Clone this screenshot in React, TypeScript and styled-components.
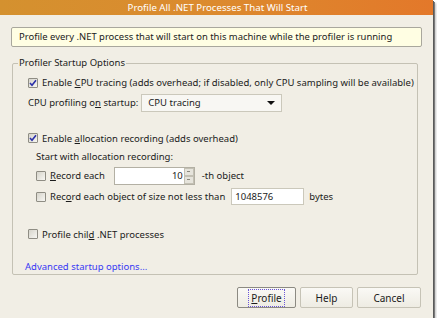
import React from "react";
import styled, { createGlobalStyle } from "styled-components";

const Global = createGlobalStyle`
  html, body { margin: 0; padding: 0; background: #ffffff; }
  body { font-family: "Noto Sans", "Open Sans", sans-serif; color: #1b1b1b; }
  * { box-sizing: border-box; }
`;

const Window = styled.div`
  width: 433px;
  height: 318px;
  background: #f1eee5;
  display: flex;
  flex-direction: column;
  box-shadow: 1px 1px 0 #5a5a5a, 2px 2px 0 #7a7a7a, 3px 3px 2px rgba(0,0,0,0.25);
`;

const TitleBar = styled.div`
  height: 15px;
  background: linear-gradient(to right, #d4912f, #dc8a2e 50%, #e3782a);
  color: #fff;
  font-size: 9.7px;
  line-height: 15px;
  text-align: center;
  padding-left: 2px;
`;

const Body = styled.div`
  flex: 1;
  display: flex;
  flex-direction: column;
  padding: 12px 0 0 11px;
  font-size: 9.5px;
`;

const Description = styled.div`
  width: 411px;
  height: 20px;
  background: #fffee3;
  border: 1px solid #a9a79d;
  border-radius: 2px;
  padding-left: 7px;
  line-height: 18px;
  font-size: 9.45px;
`;

const Group = styled.section`
  margin: 16px 0 0 1px;
  width: 406px;
  height: 212px;
  border: 1px solid #c4c1b4;
  border-radius: 2px;
  padding: 0 0 0 15px;
  display: flex;
  flex-direction: column;
`;

const GroupTitle = styled.div`
  align-self: flex-start;
  margin: -7px 0 0 -10px;
  padding: 0 1px;
  background: #f1eee5;
  line-height: 12px;
  height: 12px;
`;

const Row = styled.div<{ $top: number; $indent?: number }>`
  display: flex;
  align-items: center;
  height: 14px;
  margin-top: ${(p) => p.$top}px;
  margin-left: ${(p) => p.$indent ?? 0}px;
  white-space: nowrap;
`;

const Box = styled.span`
  width: 10px;
  height: 10px;
  border: 1px solid #8f8d84;
  border-radius: 1px;
  background: linear-gradient(135deg, #d6d4cb, #f7f6f2);
  margin-right: 4px;
  display: inline-flex;
  align-items: center;
  justify-content: center;
  flex: none;
`;

const U = styled.span`
  text-decoration: underline;
`;

const Combo = styled.div`
  margin-left: 3px;
  width: 141px;
  height: 18px;
  border: 1px solid #cbc8bb;
  background: #f8f7f3;
  display: flex;
  align-items: center;
  justify-content: space-between;
  padding: 0 6px 0 6px;
`;

const Arrow = styled.span`
  width: 0;
  height: 0;
  border-left: 4px solid transparent;
  border-right: 4px solid transparent;
  border-top: 4px solid #111;
`;

const Spin = styled.div`
  margin-left: 9px;
  width: 81px;
  height: 18px;
  border: 1px solid #b3b0a4;
  background: #fff;
  display: flex;
  align-items: stretch;
`;

const SpinValue = styled.div`
  flex: 1;
  text-align: right;
  padding-right: 1px;
  line-height: 16px;
`;

const SpinButtons = styled.div`
  width: 10px;
  display: flex;
  flex-direction: column;
`;

const SpinBtn = styled.div`
  flex: 1;
  background: #e6e4dc;
  border: 1px solid #c3c0b4;
  display: flex;
  align-items: center;
  justify-content: center;
  &::after {
    content: "";
    width: 3px;
    height: 1px;
    background: #8a877d;
  }
`;

const TextInput = styled.div`
  margin-left: 6px;
  width: 73px;
  height: 17px;
  border: 1px solid #cbc8bb;
  background: #fff;
  padding-left: 3px;
  line-height: 15px;
`;

const After = styled.span<{ $gap: number }>`
  margin-left: ${(p) => p.$gap}px;
`;

const Link = styled.div`
  margin-top: 19px;
  margin-left: -3px;
  color: #3838f4;
  height: 14px;
  line-height: 14px;
`;

const Buttons = styled.div`
  display: flex;
  gap: 4px;
  margin: 12px 0 0 226px;
`;

const Button = styled.div<{ $w: number; $default?: boolean }>`
  width: ${(p) => p.$w}px;
  height: 21px;
  border: 1px solid ${(p) => (p.$default ? "#8c8a82" : "#c6c3b6")};
  border-radius: 2px;
  background: linear-gradient(#faf9f5, #eeece3);
  display: flex;
  align-items: center;
  justify-content: center;
  font-size: 10px;
`;

const Focus = styled.span`
  outline: 1px dotted #6a55d8;
  outline-offset: 1px;
  padding: 0 1px;
`;

const Check = () => (
  <svg width="8" height="8" viewBox="0 0 8 8">
    <path d="M1 4 L3 6.2 L7 1.2" fill="none" stroke="#2a2fa8" strokeWidth="1.6" />
  </svg>
);

const CheckBox = ({ checked }: { checked?: boolean }) => <Box>{checked ? <Check /> : null}</Box>;

export default function App() {
  return (
    <>
      <Global />
      <Window>
        <TitleBar>Profile All .NET Processes That Will Start</TitleBar>
        <Body>
          <Description>Profile every .NET process that will start on this machine while the profiler is running</Description>
          <Group>
            <GroupTitle>Profiler Startup Options</GroupTitle>
            <Row $top={7}>
              <CheckBox checked />
              <span>
                Enable <U>C</U>PU tracing (adds overhead; if disabled, only CPU sampling will be available)
              </span>
            </Row>
            <Row $top={6}>
              <span>
                CPU profiling o<U>n</U> startup:
              </span>
              <Combo>
                <span>CPU tracing</span>
                <Arrow />
              </Combo>
            </Row>
            <Row $top={22}>
              <CheckBox checked />
              <span>
                Enable <U>a</U>llocation recording (adds overhead)
              </span>
            </Row>
            <Row $top={5} $indent={8}>
              <span>Start with allocation recording:</span>
            </Row>
            <Row $top={5} $indent={8}>
              <CheckBox />
              <span>
                <U>R</U>ecord each
              </span>
              <Spin>
                <SpinValue>10</SpinValue>
                <SpinButtons>
                  <SpinBtn />
                  <SpinBtn />
                </SpinButtons>
              </Spin>
              <After $gap={7}>-th object</After>
            </Row>
            <Row $top={7} $indent={8}>
              <CheckBox />
              <span>
                Rec<U>o</U>rd each object of size not less than
              </span>
              <TextInput>1048576</TextInput>
              <After $gap={5}>bytes</After>
            </Row>
            <Row $top={24}>
              <CheckBox />
              <span>
                Profile chil<U>d</U> .NET processes
              </span>
            </Row>
            <Link>Advanced startup options...</Link>
          </Group>
          <Buttons>
            <Button $w={59} $default>
              <Focus>
                <U>P</U>rofile
              </Focus>
            </Button>
            <Button $w={53}>Help</Button>
            <Button $w={64}>Cancel</Button>
          </Buttons>
        </Body>
      </Window>
    </>
  );
}
